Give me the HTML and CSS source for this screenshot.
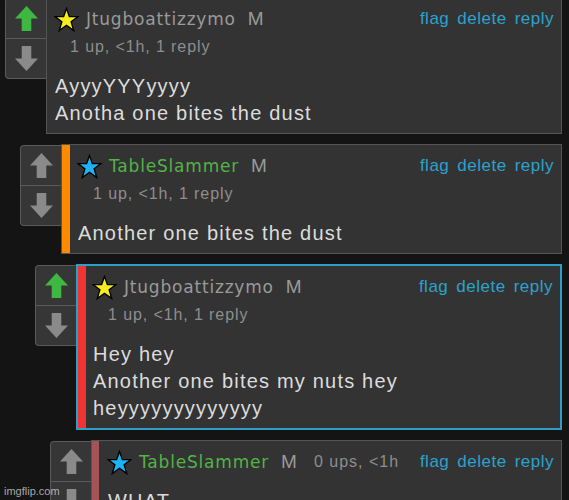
FILE: index.html
```html
<!DOCTYPE html>
<html lang="en">

<head>
  <meta charset="UTF-8">
  <meta name="viewport" content="width=device-width, initial-scale=1.0">
  <title>Comments</title>

  <link rel="stylesheet" href="styles.css">
</head>

<body>
  <main class="thread">
    <!-- level 0 -->
    <div class="comment lvl-0">
      <div class="votes">
        <div class="vote">
          <svg viewBox="0 0 24 26" class="arrow voted"><polygon points="12,0 24,13 17,13 17,26 7,26 7,13 0,13" /></svg>
        </div>
        <div class="vote">
          <svg viewBox="0 0 24 26" class="arrow down"><polygon points="12,0 24,13 17,13 17,26 7,26 7,13 0,13" /></svg>
        </div>
      </div>
      <div class="box">
        <div class="head">
          <svg viewBox="0 0 26 26" class="star yellow"><polygon points="13,1.5 16,10 25,10 17.8,15.4 20.5,24.5 13,19 5.5,24.5 8.2,15.4 1,10 10,10" /></svg>
          <span class="user">Jtugboattizzymo</span>
          <span class="mod">M</span>
          <span class="links"><a>flag</a><a>delete</a><a>reply</a></span>
        </div>
        <div class="meta">1 up, &lt;1h, 1 reply</div>
        <div class="text">AyyyYYYyyyy<br>Anotha one bites the dust</div>
      </div>
    </div>

    <!-- level 1 -->
    <div class="comment lvl-1">
      <div class="votes">
        <div class="vote">
          <svg viewBox="0 0 24 26" class="arrow"><polygon points="12,0 24,13 17,13 17,26 7,26 7,13 0,13" /></svg>
        </div>
        <div class="vote">
          <svg viewBox="0 0 24 26" class="arrow down"><polygon points="12,0 24,13 17,13 17,26 7,26 7,13 0,13" /></svg>
        </div>
      </div>
      <div class="box bar-orange">
        <div class="head">
          <svg viewBox="0 0 26 26" class="star blue"><polygon points="13,1.5 16,10 25,10 17.8,15.4 20.5,24.5 13,19 5.5,24.5 8.2,15.4 1,10 10,10" /></svg>
          <span class="user green">TableSlammer</span>
          <span class="mod">M</span>
          <span class="links"><a>flag</a><a>delete</a><a>reply</a></span>
        </div>
        <div class="meta">1 up, &lt;1h, 1 reply</div>
        <div class="text">Another one bites the dust</div>
      </div>
    </div>

    <!-- level 2 -->
    <div class="comment lvl-2">
      <div class="votes">
        <div class="vote">
          <svg viewBox="0 0 24 26" class="arrow voted"><polygon points="12,0 24,13 17,13 17,26 7,26 7,13 0,13" /></svg>
        </div>
        <div class="vote">
          <svg viewBox="0 0 24 26" class="arrow down"><polygon points="12,0 24,13 17,13 17,26 7,26 7,13 0,13" /></svg>
        </div>
      </div>
      <div class="box bar-red selected">
        <div class="head">
          <svg viewBox="0 0 26 26" class="star yellow"><polygon points="13,1.5 16,10 25,10 17.8,15.4 20.5,24.5 13,19 5.5,24.5 8.2,15.4 1,10 10,10" /></svg>
          <span class="user">Jtugboattizzymo</span>
          <span class="mod">M</span>
          <span class="links"><a>flag</a><a>delete</a><a>reply</a></span>
        </div>
        <div class="meta">1 up, &lt;1h, 1 reply</div>
        <div class="text">Hey hey<br>Another one bites my nuts hey<br>heyyyyyyyyyyyyy</div>
      </div>
    </div>

    <!-- level 3 -->
    <div class="comment lvl-3">
      <div class="votes">
        <div class="vote">
          <svg viewBox="0 0 24 26" class="arrow"><polygon points="12,0 24,13 17,13 17,26 7,26 7,13 0,13" /></svg>
        </div>
        <div class="vote">
          <svg viewBox="0 0 24 26" class="arrow down"><polygon points="12,0 24,13 17,13 17,26 7,26 7,13 0,13" /></svg>
        </div>
      </div>
      <div class="box bar-rose">
        <div class="head">
          <svg viewBox="0 0 26 26" class="star blue"><polygon points="13,1.5 16,10 25,10 17.8,15.4 20.5,24.5 13,19 5.5,24.5 8.2,15.4 1,10 10,10" /></svg>
          <span class="user green">TableSlammer</span>
          <span class="mod">M</span>
          <span class="inline-meta">0 ups, &lt;1h</span>
          <span class="links"><a>flag</a><a>delete</a><a>reply</a></span>
        </div>
        <div class="text">WHAT</div>
      </div>
    </div>
  </main>

  <div class="watermark">imgflip.com</div>
</body>

</html>
```

FILE: styles.css
```css
html,
body {
  background: #141414;
  height: 100%;
  margin: 0;
  overflow: hidden;
}

body {
  font-family: "Liberation Sans", Arial, sans-serif;
}

.thread {
  margin-top: -3px;
}

.comment {
  align-items: flex-start;
  display: flex;
  margin: 0 7px 10px 0;
}

.lvl-0 { margin-left: 5px; }
.lvl-1 { margin-left: 20px; }
.lvl-2 { margin-left: 35px; }
.lvl-3 { margin-left: 50px; }

.votes {
  background: #363636;
  border: 1px solid #5a5a5a;
  border-radius: 4px 0 0 4px;
  border-right: none;
  flex: none;
  margin-top: 1px;
  width: 40px;
}

.vote {
  align-items: center;
  display: flex;
  height: 39px;
  justify-content: center;
}

.vote + .vote {
  border-top: 1px solid #5a5a5a;
}

.arrow {
  fill: #8a8a8a;
  height: 25px;
  width: 23px;
}

.arrow.voted {
  fill: #3fb843;
}

.arrow.down {
  transform: rotate(180deg);
}

.box {
  background: #333333;
  border: 1px solid #555555;
  box-sizing: border-box;
  flex: 1;
  padding: 7px 7px 6px 8px;
}

.bar-orange {
  box-shadow: inset 8px 0 0 #ff8a00;
  padding-left: 16px;
}

.bar-red {
  box-shadow: inset 8px 0 0 #f03434;
  padding-left: 15px;
}

.bar-rose {
  box-shadow: inset 7px 0 0 #a35456;
  padding-left: 16px;
}

.selected {
  border: 2px solid #2c9fc9;
}

.head {
  align-items: center;
  display: flex;
  height: 28px;
  white-space: nowrap;
}

.star {
  flex: none;
  height: 25px;
  margin: 0 7px 0 -1px;
  stroke: #000;
  stroke-width: 1.4;
  width: 25px;
}

.star.yellow {
  fill: #f7ec1c;
}

.star.blue {
  fill: #1fb2f5;
}

.user {
  color: #9a9a9a;
  font-family: "DejaVu Sans", sans-serif;
  font-size: 17px;
  letter-spacing: 0.8px;
}

.user.green {
  color: #52b347;
}

.mod {
  color: #9a9a9a;
  font-size: 19px;
  margin-left: 12px;
}

.inline-meta {
  color: #8e8e8e;
  font-size: 16px;
  letter-spacing: 1px;
  margin-left: 17px;
}

.links {
  font-size: 17px;
  letter-spacing: 0.5px;
  margin-left: auto;
}

.links a {
  color: #2ca2cc;
  cursor: pointer;
  margin-left: 8px;
}

.meta {
  color: #8e8e8e;
  font-size: 16px;
  height: 28px;
  letter-spacing: 0.9px;
  line-height: 28px;
  padding-left: 15px;
}

.text {
  color: #dcdcdc;
  font-size: 20px;
  letter-spacing: 1.2px;
  line-height: 27px;
  margin-top: 12px;
}

.watermark {
  bottom: 3px;
  color: rgba(220, 220, 220, 0.75);
  font-size: 11px;
  left: 4px;
  position: absolute;
}
```
